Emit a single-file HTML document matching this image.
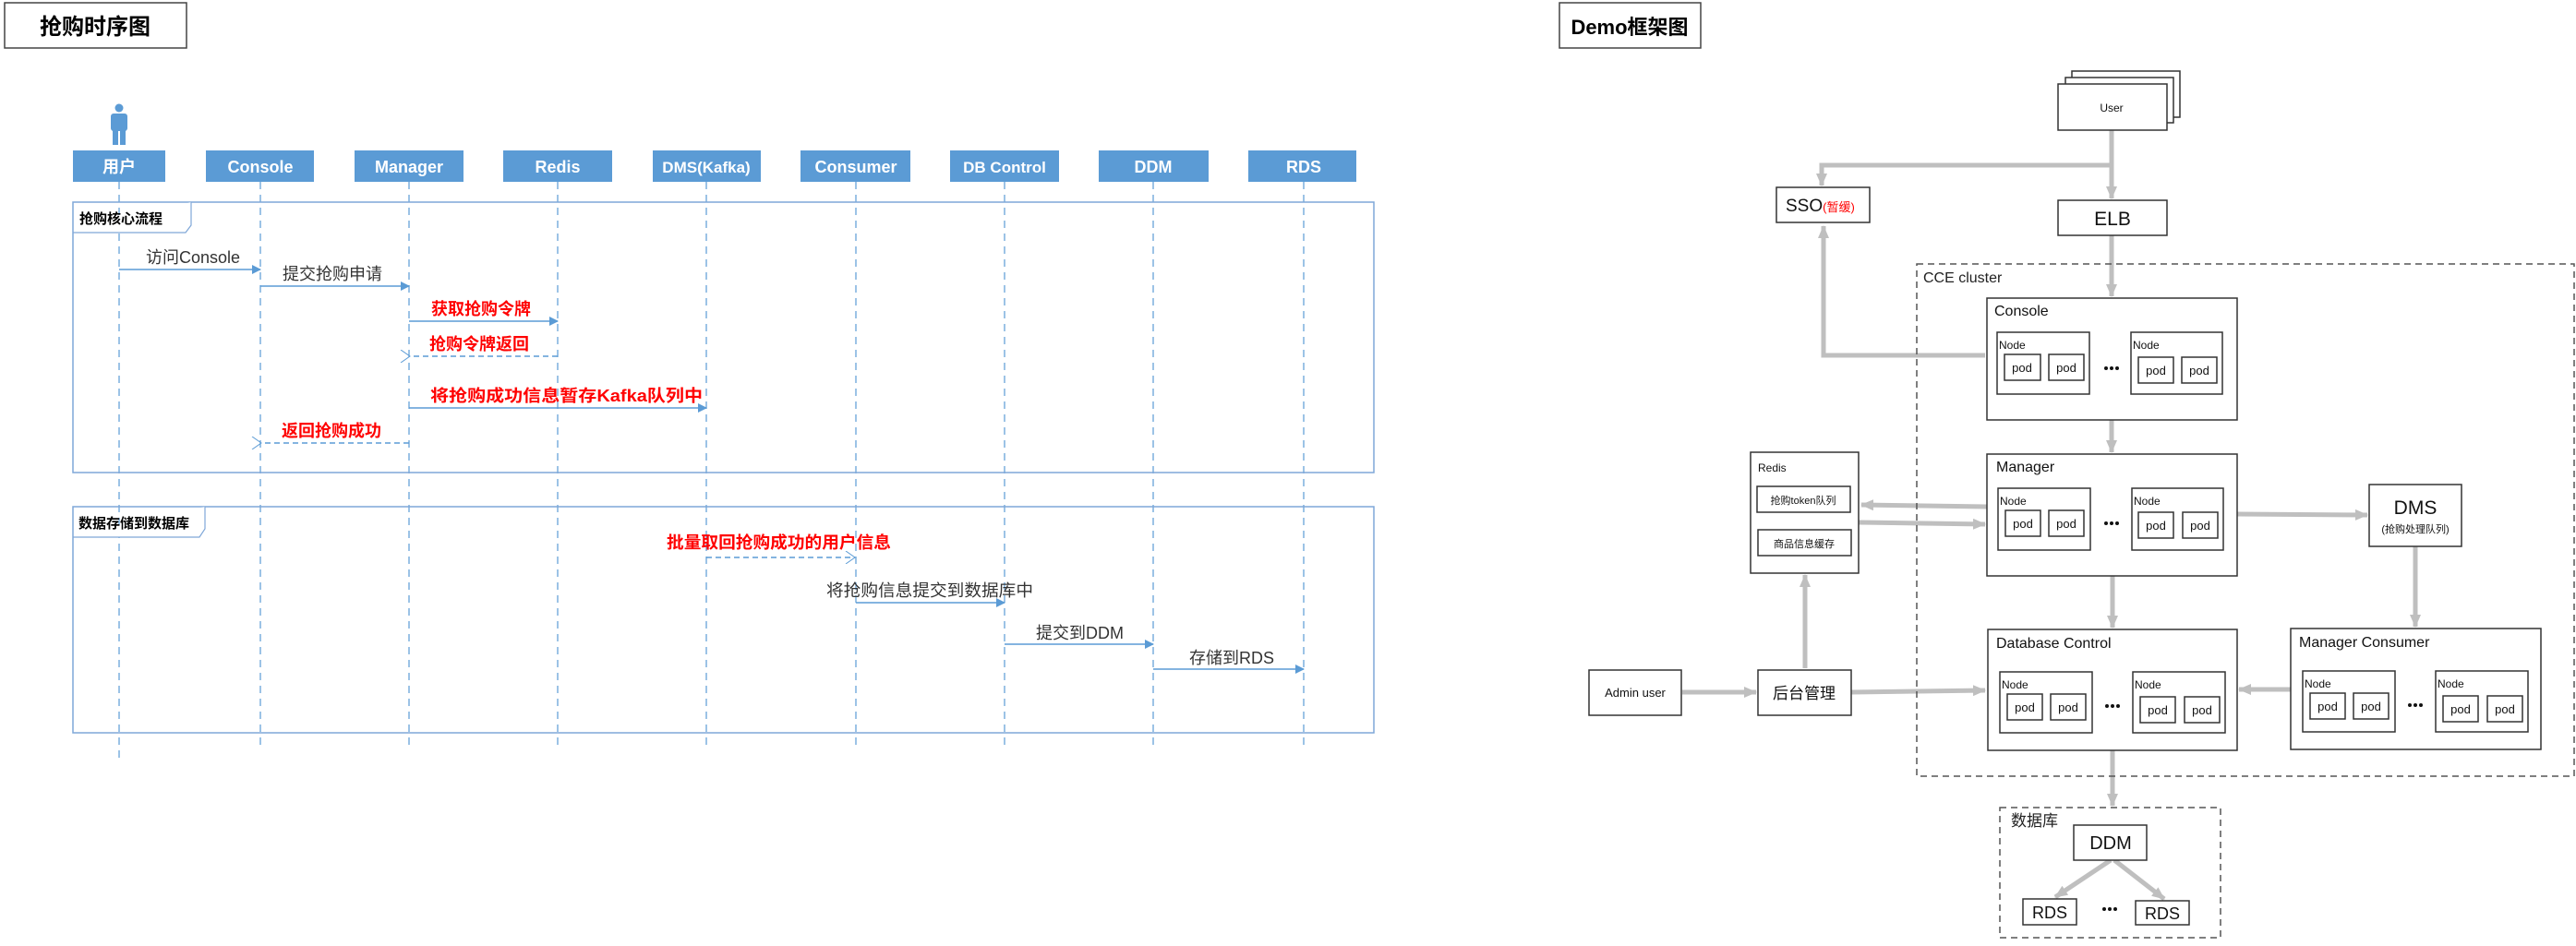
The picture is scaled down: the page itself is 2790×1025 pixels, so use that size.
<!DOCTYPE html>
<html><head><meta charset="utf-8"><style>
html,body{margin:0;padding:0;background:#fff;width:2790px;height:1025px;overflow:hidden}
svg{display:block}
text{font-family:"Liberation Sans","Noto Sans CJK SC",sans-serif}
</style></head><body>
<svg width="2790" height="1025" viewBox="0 0 2790 1025" xmlns="http://www.w3.org/2000/svg">
<defs>
<marker id="fa" markerWidth="10" markerHeight="10" refX="9" refY="5" orient="auto" markerUnits="userSpaceOnUse"><path d="M0,0 L10,5 L0,10 z" fill="#5b9bd5"/></marker>
<marker id="oa" markerWidth="12" markerHeight="14" refX="1" refY="7" orient="auto" markerUnits="userSpaceOnUse"><path d="M11,0 L1,7 L11,14" fill="none" stroke="#5b9bd5" stroke-width="1"/></marker>
<marker id="oa2" markerWidth="12" markerHeight="14" refX="11" refY="7" orient="auto" markerUnits="userSpaceOnUse"><path d="M1,0 L11,7 L1,14" fill="none" stroke="#5b9bd5" stroke-width="1"/></marker>
<marker id="ga" markerWidth="14" markerHeight="12" refX="13" refY="6" orient="auto" markerUnits="userSpaceOnUse"><path d="M0,0 L14,6 L0,12 z" fill="#bfbfbf"/></marker>
</defs>

<rect x="5" y="3" width="197" height="49" fill="#fff" stroke="#444" stroke-width="1.5"/>
<text x="103" y="37" font-size="24" font-weight="bold" text-anchor="middle" fill="#000">抢购时序图</text>

<g fill="#5b9bd5">
<circle cx="129" cy="117" r="4.5"/>
<rect x="120" y="123" width="18" height="19" rx="3"/>
<rect x="122" y="138" width="6" height="19"/>
<rect x="130" y="138" width="6" height="19"/>
</g>

<g stroke="#5b9bd5" stroke-width="1.2" stroke-dasharray="8,6">
<line x1="129" y1="197" x2="129" y2="821"/>
<line x1="282" y1="197" x2="282" y2="813"/>
<line x1="443" y1="197" x2="443" y2="813"/>
<line x1="604" y1="197" x2="604" y2="813"/>
<line x1="765" y1="197" x2="765" y2="813"/>
<line x1="927" y1="197" x2="927" y2="813"/>
<line x1="1088" y1="197" x2="1088" y2="813"/>
<line x1="1249" y1="197" x2="1249" y2="813"/>
<line x1="1412" y1="197" x2="1412" y2="813"/>
</g>

<g fill="#5b9bd5">
<rect x="79" y="163" width="100" height="34"/>
<rect x="223" y="163" width="117" height="34"/>
<rect x="384" y="163" width="118" height="34"/>
<rect x="545" y="163" width="118" height="34"/>
<rect x="707" y="163" width="117" height="34"/>
<rect x="867" y="163" width="119" height="34"/>
<rect x="1029" y="163" width="118" height="34"/>
<rect x="1190" y="163" width="119" height="34"/>
<rect x="1352" y="163" width="117" height="34"/>
</g>
<g fill="#fff" font-size="18" font-weight="bold" text-anchor="middle">
<text x="129" y="187">用户</text>
<text x="282" y="187">Console</text>
<text x="443" y="187">Manager</text>
<text x="604" y="187">Redis</text>
<text x="765" y="187" font-size="17">DMS(Kafka)</text>
<text x="927" y="187">Consumer</text>
<text x="1088" y="187" font-size="17">DB Control</text>
<text x="1249" y="187">DDM</text>
<text x="1412" y="187">RDS</text>
</g>

<rect x="79" y="219" width="1409" height="293" fill="none" stroke="#7fa7d8" stroke-width="1.5"/>
<path d="M79,252 L201,252 L207,244 L207,219" fill="#fff" stroke="#7fa7d8" stroke-width="1.2"/>
<text x="86" y="242" font-size="15" font-weight="bold" fill="#000">抢购核心流程</text>

<rect x="79" y="549" width="1409" height="245" fill="none" stroke="#7fa7d8" stroke-width="1.5"/>
<path d="M79,582 L216,582 L222,573 L222,549" fill="#fff" stroke="#7fa7d8" stroke-width="1.2"/>
<text x="85" y="572" font-size="15" font-weight="bold" fill="#000">数据存储到数据库</text>

<g stroke="#5b9bd5" stroke-width="1.5" fill="none">
<line x1="129" y1="292" x2="282" y2="292" marker-end="url(#fa)"/>
<line x1="282" y1="310" x2="443" y2="310" marker-end="url(#fa)"/>
<line x1="443" y1="348" x2="604" y2="348" marker-end="url(#fa)"/>
<line x1="604" y1="386" x2="444" y2="386" stroke-dasharray="6,4" marker-end="url(#oa)"/>
<line x1="443" y1="442" x2="765" y2="442" marker-end="url(#fa)"/>
<line x1="443" y1="480" x2="283" y2="480" stroke-dasharray="6,4" marker-end="url(#oa)"/>
<line x1="765" y1="604" x2="926" y2="604" stroke-dasharray="6,4" marker-end="url(#oa2)"/>
<line x1="927" y1="653" x2="1088" y2="653" marker-end="url(#fa)"/>
<line x1="1088" y1="698" x2="1249" y2="698" marker-end="url(#fa)"/>
<line x1="1249" y1="725" x2="1412" y2="725" marker-end="url(#fa)"/>
</g>
<g font-size="18">
<text x="158" y="285" fill="#333">访问Console</text>
<text x="306" y="303" fill="#333">提交抢购申请</text>
<text x="467" y="341" fill="#f00" font-weight="bold">获取抢购令牌</text>
<text x="465" y="379" fill="#f00" font-weight="bold">抢购令牌返回</text>
<text x="466" y="435" fill="#f00" font-weight="bold" textLength="295" lengthAdjust="spacingAndGlyphs">将抢购成功信息暂存Kafka队列中</text>
<text x="305" y="473" fill="#f00" font-weight="bold">返回抢购成功</text>
<text x="722" y="594" fill="#f00" font-weight="bold" textLength="243" lengthAdjust="spacingAndGlyphs">批量取回抢购成功的用户信息</text>
<text x="895" y="646" fill="#333" textLength="224" lengthAdjust="spacingAndGlyphs">将抢购信息提交到数据库中</text>
<text x="1122" y="692" fill="#333">提交到DDM</text>
<text x="1288" y="719" fill="#333">存储到RDS</text>
</g>

<rect x="1689" y="3" width="153" height="49" fill="#fff" stroke="#444" stroke-width="1.5"/>
<text x="1765" y="37" font-size="22" font-weight="bold" text-anchor="middle" fill="#000">Demo框架图</text>

<g stroke="#bfbfbf" stroke-width="5" fill="none">
<line x1="2287" y1="141" x2="2287" y2="215" marker-end="url(#ga)"/>
<polyline points="2287,179 1973,179 1973,201" marker-end="url(#ga)"/>
<polyline points="2150,385 1975,385 1975,245" marker-end="url(#ga)"/>
<line x1="2287" y1="255" x2="2287" y2="321" marker-end="url(#ga)"/>
<line x1="2287" y1="455" x2="2287" y2="490" marker-end="url(#ga)"/>
<line x1="2152" y1="549" x2="2016" y2="547" marker-end="url(#ga)"/>
<line x1="2013" y1="566" x2="2150" y2="568" marker-end="url(#ga)"/>
<line x1="2423" y1="557" x2="2564" y2="558" marker-end="url(#ga)"/>
<line x1="2616" y1="592" x2="2616" y2="679" marker-end="url(#ga)"/>
<line x1="2288" y1="624" x2="2288" y2="680" marker-end="url(#ga)"/>
<line x1="2481" y1="747" x2="2425" y2="747" marker-end="url(#ga)"/>
<line x1="1822" y1="750" x2="1902" y2="750" marker-end="url(#ga)"/>
<line x1="2005" y1="750" x2="2150" y2="748" marker-end="url(#ga)"/>
<line x1="1955" y1="724" x2="1955" y2="623" marker-end="url(#ga)"/>
<line x1="2288" y1="813" x2="2288" y2="873" marker-end="url(#ga)"/>
<line x1="2286" y1="932" x2="2226" y2="972" marker-end="url(#ga)"/>
<line x1="2290" y1="932" x2="2344" y2="974" marker-end="url(#ga)"/>
</g>

<rect x="2076" y="286" width="712" height="555" fill="none" stroke="#555" stroke-width="1.5" stroke-dasharray="7,5"/>
<text x="2083" y="306" font-size="16" fill="#222">CCE cluster</text>
<rect x="2166" y="875" width="239" height="141" fill="none" stroke="#555" stroke-width="1.5" stroke-dasharray="7,5"/>
<text x="2178" y="895" font-size="17" fill="#222">数据库</text>

<g fill="#fff" stroke="#333" stroke-width="1.5">
<rect x="2244" y="77" width="117" height="50"/>
<rect x="2237" y="84" width="117" height="49"/>
<rect x="2229" y="91" width="118" height="50"/>
<rect x="1924" y="203" width="101" height="38"/>
<rect x="2229" y="217" width="118" height="38"/>
<rect x="2152" y="323" width="271" height="132"/>
<rect x="2152" y="492" width="271" height="132"/>
<rect x="1896" y="490" width="117" height="131"/>
<rect x="1903" y="527" width="101" height="28"/>
<rect x="1904" y="574" width="101" height="28"/>
<rect x="2566" y="525" width="100" height="67"/>
<rect x="2153" y="682" width="270" height="131"/>
<rect x="2481" y="681" width="271" height="131"/>
<rect x="1721" y="726" width="100" height="49"/>
<rect x="1904" y="726" width="101" height="49"/>
<rect x="2246" y="894" width="79" height="38"/>
<rect x="2191" y="974" width="58" height="28"/>
<rect x="2313" y="976" width="58" height="26"/>
<rect x="2163" y="360" width="100" height="67"/>
<rect x="2308" y="360" width="99" height="67"/>
<rect x="2164" y="529" width="100" height="67"/>
<rect x="2309" y="529" width="99" height="67"/>
<rect x="2166" y="728" width="100" height="66"/>
<rect x="2310" y="728" width="100" height="66"/>
<rect x="2494" y="727" width="100" height="66"/>
<rect x="2638" y="727" width="100" height="66"/>
<rect x="2171" y="384" width="39" height="28"/><rect x="2219" y="384" width="38" height="28"/>
<rect x="2316" y="387" width="38" height="28"/><rect x="2363" y="387" width="38" height="28"/>
<rect x="2172" y="553" width="38" height="28"/><rect x="2219" y="553" width="38" height="28"/>
<rect x="2316" y="555" width="38" height="28"/><rect x="2364" y="555" width="38" height="28"/>
<rect x="2174" y="752" width="38" height="28"/><rect x="2221" y="752" width="38" height="28"/>
<rect x="2318" y="755" width="38" height="28"/><rect x="2366" y="755" width="38" height="28"/>
<rect x="2502" y="751" width="38" height="28"/><rect x="2549" y="751" width="38" height="28"/>
<rect x="2646" y="754" width="38" height="28"/><rect x="2694" y="754" width="38" height="28"/>
</g>

<g fill="#111">
<text x="2287" y="121" font-size="12" text-anchor="middle">User</text>
<text x="1934" y="229" font-size="19">SSO<tspan font-size="13" fill="#f00">(暂缓)</tspan></text>
<text x="2288" y="244" font-size="21" text-anchor="middle">ELB</text>
<text x="2160" y="342" font-size="16">Console</text>
<text x="2162" y="511" font-size="16">Manager</text>
<text x="1904" y="511" font-size="12">Redis</text>
<text x="1953" y="546" font-size="11" text-anchor="middle">抢购token队列</text>
<text x="1954" y="593" font-size="11" text-anchor="middle">商品信息缓存</text>
<text x="2616" y="557" font-size="21" text-anchor="middle">DMS</text>
<text x="2616" y="577" font-size="11" text-anchor="middle">(抢购处理队列)</text>
<text x="2162" y="702" font-size="16">Database Control</text>
<text x="2490" y="701" font-size="16">Manager Consumer</text>
<text x="1771" y="755" font-size="13" text-anchor="middle">Admin user</text>
<text x="1954" y="757" font-size="17" text-anchor="middle">后台管理</text>
<text x="2286" y="920" font-size="20" text-anchor="middle">DDM</text>
<text x="2220" y="995" font-size="18" text-anchor="middle">RDS</text>
<text x="2342" y="996" font-size="18" text-anchor="middle">RDS</text>
<g font-size="12">
<text x="2165" y="378">Node</text><text x="2310" y="378">Node</text>
<text x="2166" y="547">Node</text><text x="2311" y="547">Node</text>
<text x="2168" y="746">Node</text><text x="2312" y="746">Node</text>
<text x="2496" y="745">Node</text><text x="2640" y="745">Node</text>
</g>
<g font-size="13" text-anchor="middle">
<text x="2190" y="403">pod</text><text x="2238" y="403">pod</text>
<text x="2335" y="406">pod</text><text x="2382" y="406">pod</text>
<text x="2191" y="572">pod</text><text x="2238" y="572">pod</text>
<text x="2335" y="574">pod</text><text x="2383" y="574">pod</text>
<text x="2193" y="771">pod</text><text x="2240" y="771">pod</text>
<text x="2337" y="774">pod</text><text x="2385" y="774">pod</text>
<text x="2521" y="770">pod</text><text x="2568" y="770">pod</text>
<text x="2665" y="773">pod</text><text x="2713" y="773">pod</text>
</g>
<g>
<circle cx="2281" cy="399" r="2"/><circle cx="2287" cy="399" r="2"/><circle cx="2293" cy="399" r="2"/>
<circle cx="2281" cy="567" r="2"/><circle cx="2287" cy="567" r="2"/><circle cx="2293" cy="567" r="2"/>
<circle cx="2282" cy="765" r="2"/><circle cx="2288" cy="765" r="2"/><circle cx="2294" cy="765" r="2"/>
<circle cx="2610" cy="764" r="2"/><circle cx="2616" cy="764" r="2"/><circle cx="2622" cy="764" r="2"/>
<circle cx="2279" cy="985" r="2"/><circle cx="2285" cy="985" r="2"/><circle cx="2291" cy="985" r="2"/>
</g>
</g>
</svg>
</body></html>
